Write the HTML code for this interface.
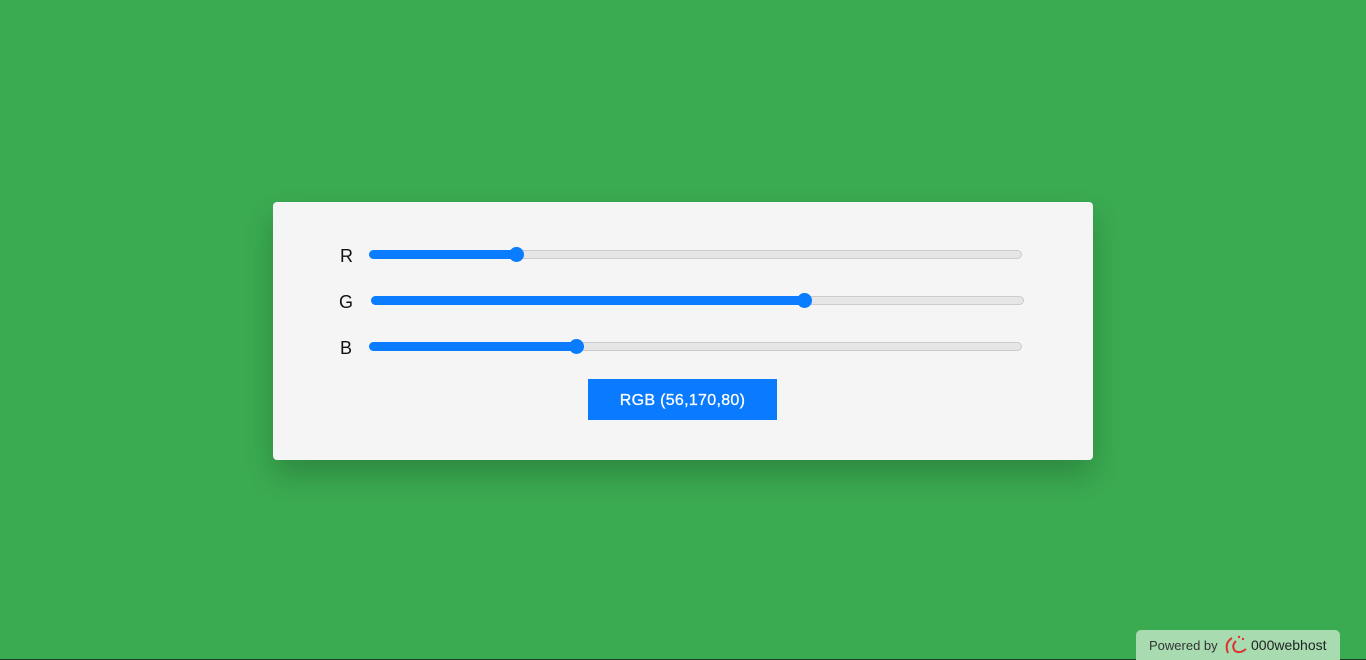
<!DOCTYPE html>
<html><head><style>
body{margin:0;width:1366px;height:660px;background:#3aab51;position:relative;overflow:hidden;font-family:"Liberation Sans",sans-serif;}
.card{position:absolute;left:273px;top:202px;width:820px;height:258px;background:#f5f5f5;border-radius:4px;box-shadow:0 15px 30px rgba(0,0,0,.2);}
.lab{position:absolute;font-size:18px;color:#111;}
.track{position:absolute;height:7px;border:1px solid #ccc;background:#e6e6e6;border-radius:5px;}
.fill{position:absolute;height:9px;background:#0a7cff;border-radius:5px;}
.th{position:absolute;width:15px;height:15px;border-radius:50%;background:#0a7cff;}
.btn{position:absolute;left:588px;top:379px;width:189px;height:41px;background:#0a7bff;color:#fff;font-size:16px;line-height:44px;text-align:center;letter-spacing:0.3px;-webkit-text-stroke:0.3px #fff;}
.pw{position:absolute;left:1136px;top:630px;width:204px;height:30px;background:#a8dbb0;border-radius:5px 5px 0 0;font-size:13px;color:#333;}
</style></head><body>
<div style="position:absolute;left:0;top:659px;width:1366px;height:1px;background:#1c3d24"></div>
<div class="card"></div>
<div class="lab" style="left:340px;top:246px">R</div>
<div class="track" style="left:369px;top:250px;width:651px"></div>
<div class="fill" style="left:369px;top:250px;width:148px"></div>
<div class="th" style="left:509px;top:247px"></div>
<div class="lab" style="left:339px;top:292px">G</div>
<div class="track" style="left:371px;top:296px;width:651px"></div>
<div class="fill" style="left:371px;top:296px;width:434px"></div>
<div class="th" style="left:797px;top:293px"></div>
<div class="lab" style="left:340px;top:338px">B</div>
<div class="track" style="left:369px;top:342px;width:651px"></div>
<div class="fill" style="left:369px;top:342px;width:208px"></div>
<div class="th" style="left:569px;top:339px"></div>
<div class="btn">RGB (56,170,80)</div>
<div class="pw"><span style="position:absolute;left:13px;top:8px">Powered by</span>
<svg style="position:absolute;left:86px;top:3px" width="26" height="22" viewBox="0 0 26 22"><path d="M10 5 Q2 10 6 20" stroke="#d33" stroke-width="2" fill="none"/><path d="M14 8 Q9 13 13 18 Q18 21 24 16" stroke="#d33" stroke-width="2" fill="none"/><circle cx="17" cy="4" r="1.2" fill="#d33"/><circle cx="21" cy="6" r="1.2" fill="#d33"/></svg>
<span style="position:absolute;left:115px;top:7px;font-size:14px;color:#222">000webhost</span></div>
</body></html>
